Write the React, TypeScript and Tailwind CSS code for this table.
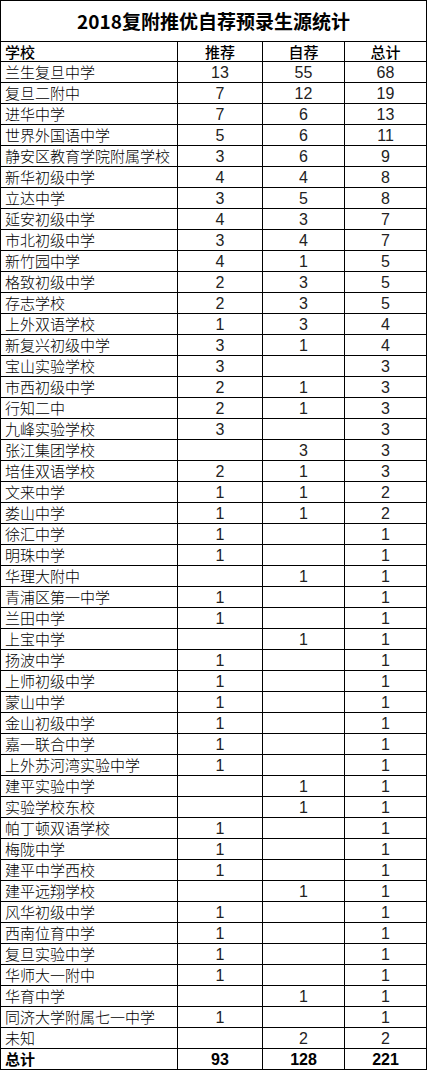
const rows: [string, string, string, string][] = [
  ["兰生复旦中学", "13", "55", "68"],
  ["复旦二附中", "7", "12", "19"],
  ["进华中学", "7", "6", "13"],
  ["世界外国语中学", "5", "6", "11"],
  ["静安区教育学院附属学校", "3", "6", "9"],
  ["新华初级中学", "4", "4", "8"],
  ["立达中学", "3", "5", "8"],
  ["延安初级中学", "4", "3", "7"],
  ["市北初级中学", "3", "4", "7"],
  ["新竹园中学", "4", "1", "5"],
  ["格致初级中学", "2", "3", "5"],
  ["存志学校", "2", "3", "5"],
  ["上外双语学校", "1", "3", "4"],
  ["新复兴初级中学", "3", "1", "4"],
  ["宝山实验学校", "3", "", "3"],
  ["市西初级中学", "2", "1", "3"],
  ["行知二中", "2", "1", "3"],
  ["九峰实验学校", "3", "", "3"],
  ["张江集团学校", "", "3", "3"],
  ["培佳双语学校", "2", "1", "3"],
  ["文来中学", "1", "1", "2"],
  ["娄山中学", "1", "1", "2"],
  ["徐汇中学", "1", "", "1"],
  ["明珠中学", "1", "", "1"],
  ["华理大附中", "", "1", "1"],
  ["青浦区第一中学", "1", "", "1"],
  ["兰田中学", "1", "", "1"],
  ["上宝中学", "", "1", "1"],
  ["扬波中学", "1", "", "1"],
  ["上师初级中学", "1", "", "1"],
  ["蒙山中学", "1", "", "1"],
  ["金山初级中学", "1", "", "1"],
  ["嘉一联合中学", "1", "", "1"],
  ["上外苏河湾实验中学", "1", "", "1"],
  ["建平实验中学", "", "1", "1"],
  ["实验学校东校", "", "1", "1"],
  ["帕丁顿双语学校", "1", "", "1"],
  ["梅陇中学", "1", "", "1"],
  ["建平中学西校", "1", "", "1"],
  ["建平远翔学校", "", "1", "1"],
  ["风华初级中学", "1", "", "1"],
  ["西南位育中学", "1", "", "1"],
  ["复旦实验中学", "1", "", "1"],
  ["华师大一附中", "1", "", "1"],
  ["华育中学", "", "1", "1"],
  ["同济大学附属七一中学", "1", "", "1"],
  ["未知", "", "2", "2"],
];

function Row({
  cells,
  bold,
}: {
  cells: [string, string, string, string];
  bold?: boolean;
}) {
  return (
    <div className="grid h-[21px] grid-cols-[177px_85px_82px_82px] border-b border-black">
      <div className={`border-r border-black pl-[4px] leading-[20px] ${bold ? "font-bold" : "font-light"}`}>
        {cells[0]}
      </div>
      {cells.slice(1).map((c, i) => (
        <div
          key={i}
          className={`border-r border-black pt-[2px] text-center font-['Liberation_Sans',sans-serif] text-[16px] leading-[18px] ${
            bold ? "font-bold" : "text-[#222]"
          }`}
        >
          {c}
        </div>
      ))}
    </div>
  );
}

export default function App() {
  return (
    <div className="w-[427px] bg-white font-['Noto_Sans_CJK_SC','Noto_Sans',sans-serif] text-[15px] text-black">
      <div className="border-t border-l border-black">
        <div className="h-[41px] border-r border-b border-black text-center text-[19px] font-bold leading-[40px]">
          2018复附推优自荐预录生源统计
        </div>
        <div className="grid h-[20px] grid-cols-[177px_85px_82px_82px] border-b border-black font-medium leading-[19px]">
          <div className="border-r border-black pl-[4px]">学校</div>
          <div className="border-r border-black text-center">推荐</div>
          <div className="border-r border-black text-center">自荐</div>
          <div className="border-r border-black text-center">总计</div>
        </div>
        {rows.map((r) => (
          <Row key={r[0]} cells={r} />
        ))}
        <Row cells={["总计", "93", "128", "221"]} bold />
      </div>
    </div>
  );
}
